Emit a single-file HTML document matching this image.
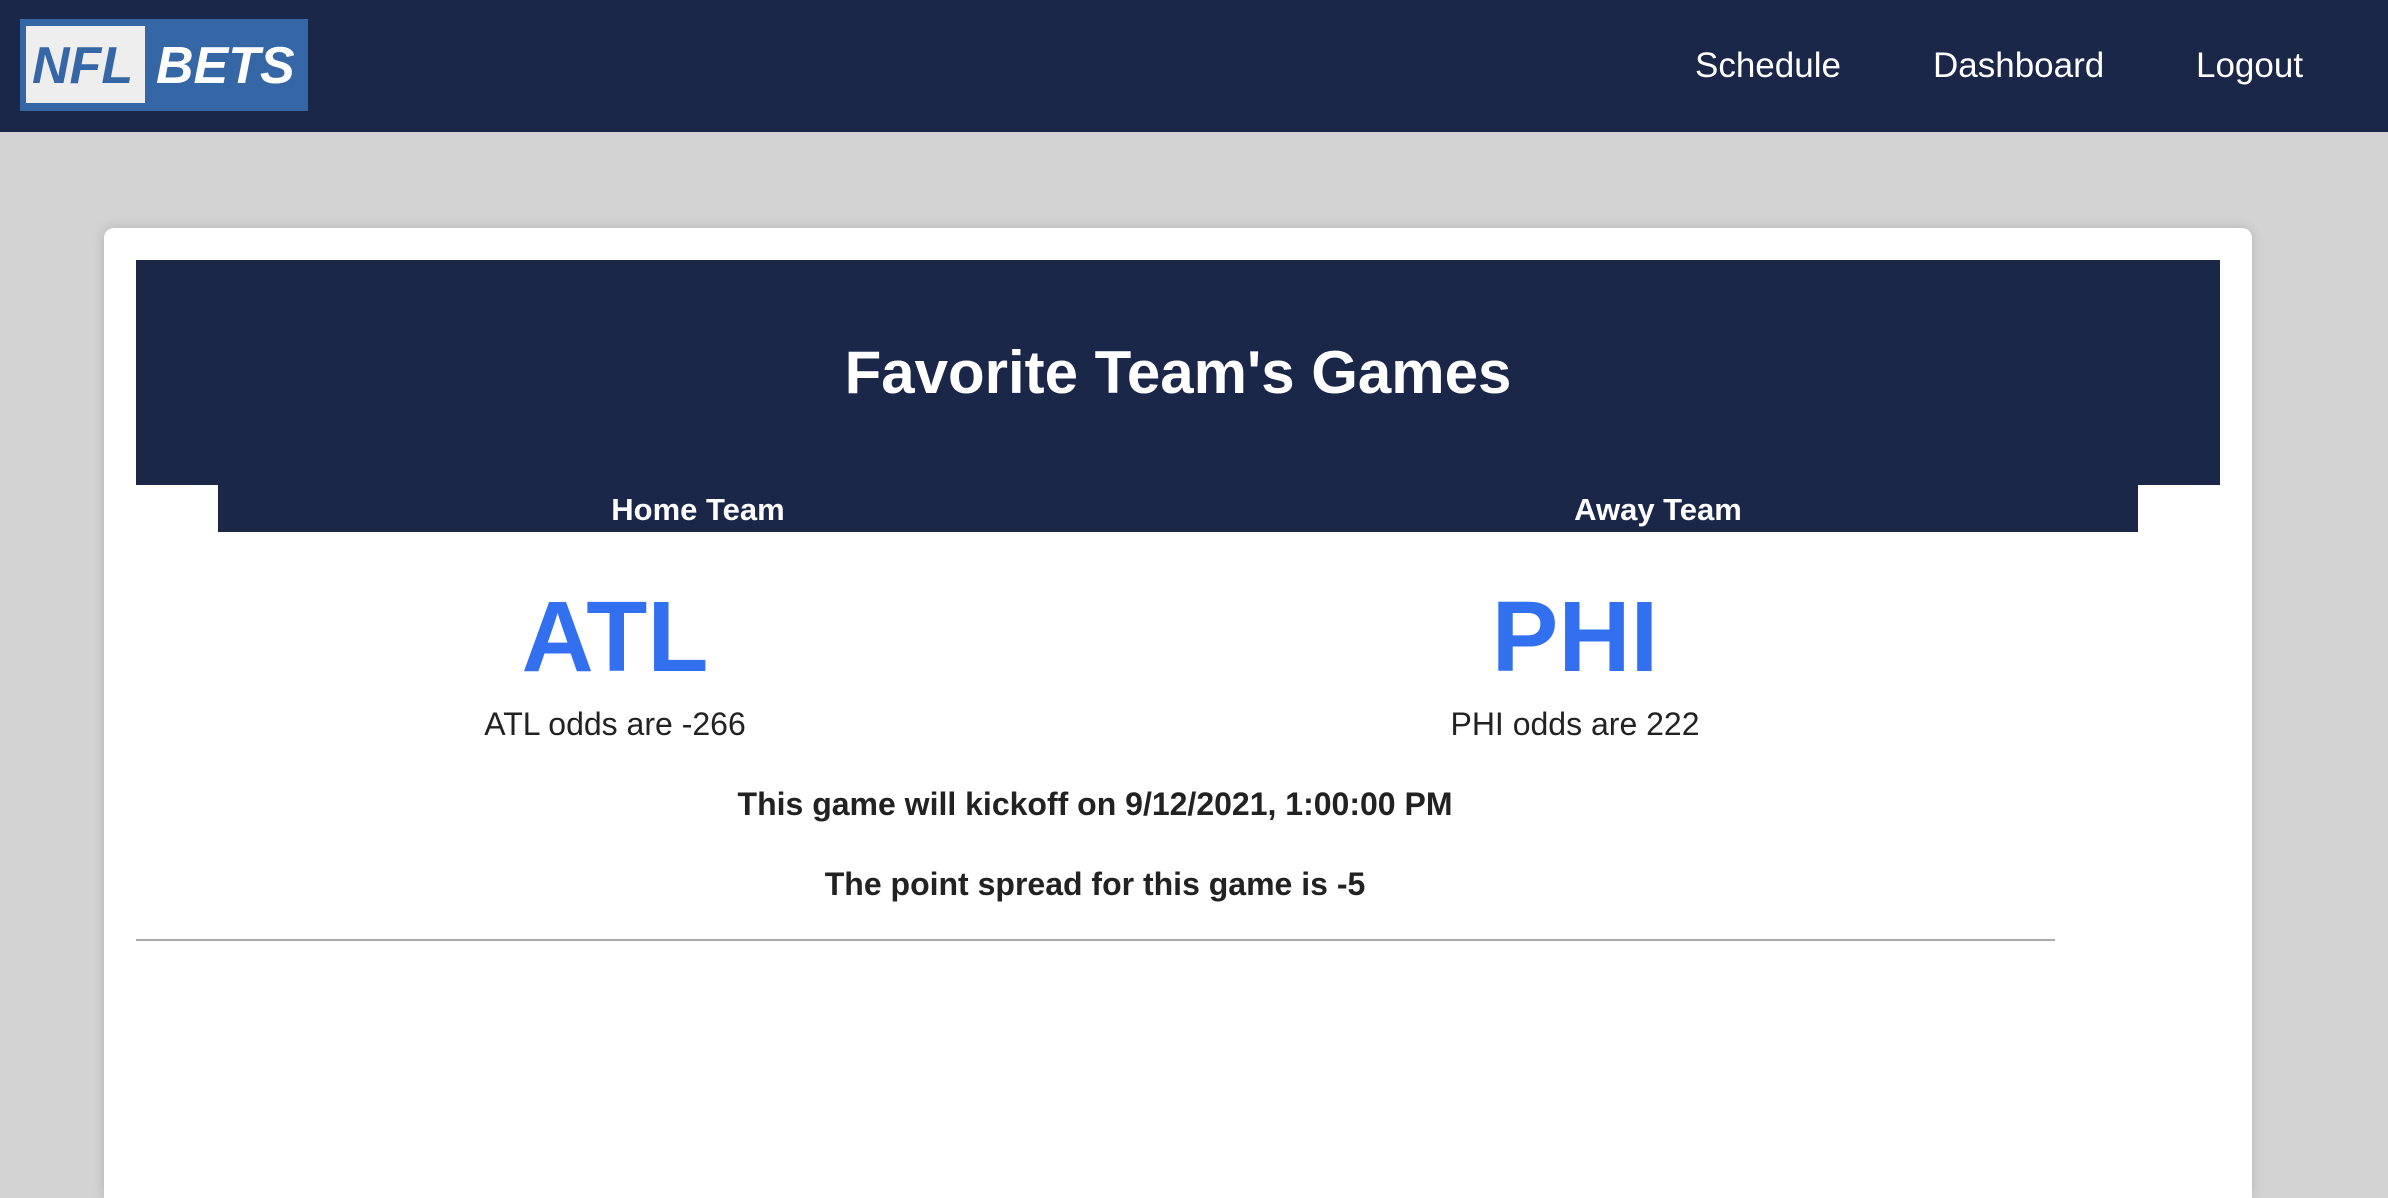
<!DOCTYPE html>
<html style="overflow:hidden;height:1198px"><head><meta charset="utf-8"><style>
*{margin:0;padding:0;box-sizing:border-box}
body{width:2388px;height:1198px;background:#d3d3d3;font-family:"Liberation Sans",sans-serif;position:relative;overflow:hidden}
.nav{position:absolute;left:0;top:0;width:2388px;height:132px;background:#1a2749}
.logo{position:absolute;left:20px;top:19px;width:288px;height:92px;background:#3567a6}
.logo .w{position:absolute;left:6px;top:7px;width:119px;height:77px;background:#eeeeee}
.logo span{position:absolute;font-weight:bold;font-style:italic;font-size:52px;top:17px}
.nl{position:absolute;top:46px;color:#fff;font-size:35px}
.abs{position:absolute;text-align:center;white-space:nowrap}
.card{position:absolute;left:104px;top:228px;width:2148px;height:970px;background:#fff;border-radius:10px 10px 0 0;box-shadow:0 0 12px rgba(0,0,0,.15)}
</style></head><body>
<div class="nav">
 <div class="logo"><div class="w"></div>
  <span style="left:12px;color:#3567a6">NFL</span>
  <span style="left:136px;color:#fff">BETS</span></div>
 <div class="nl" style="left:1695px">Schedule</div>
 <div class="nl" style="left:1933px">Dashboard</div>
 <div class="nl" style="left:2196px">Logout</div>
</div>
<div class="card"></div>
<div style="position:absolute;left:136px;top:260px;width:2084px;height:225px;background:#1a2749"></div>
<div style="position:absolute;left:218px;top:484px;width:1920px;height:48px;background:#1a2749"></div>
<div class="abs" style="left:136px;width:2084px;top:338px;color:#fff;font-weight:bold;font-size:60px">Favorite Team's Games</div>
<div class="abs" style="left:218px;width:960px;top:492px;color:#fff;font-weight:bold;font-size:31px">Home Team</div>
<div class="abs" style="left:1178px;width:960px;top:492px;color:#fff;font-weight:bold;font-size:31px">Away Team</div>
<div class="abs" style="left:315px;width:600px;top:580px;color:#3370f0;font-weight:bold;font-size:100px">ATL</div>
<div class="abs" style="left:1275px;width:600px;top:580px;color:#3370f0;font-weight:bold;font-size:100px">PHI</div>
<div class="abs" style="left:315px;width:600px;top:706px;color:#222;font-size:32px">ATL odds are -266</div>
<div class="abs" style="left:1275px;width:600px;top:706px;color:#222;font-size:32px">PHI odds are 222</div>
<div class="abs" style="left:595px;width:1000px;top:786px;color:#222;font-weight:bold;font-size:32px">This game will kickoff on 9/12/2021, 1:00:00 PM</div>
<div class="abs" style="left:595px;width:1000px;top:866px;color:#222;font-weight:bold;font-size:32px">The point spread for this game is -5</div>
<div style="position:absolute;left:136px;top:939px;width:1919px;height:2px;background:#aaa"></div>
</body></html>
